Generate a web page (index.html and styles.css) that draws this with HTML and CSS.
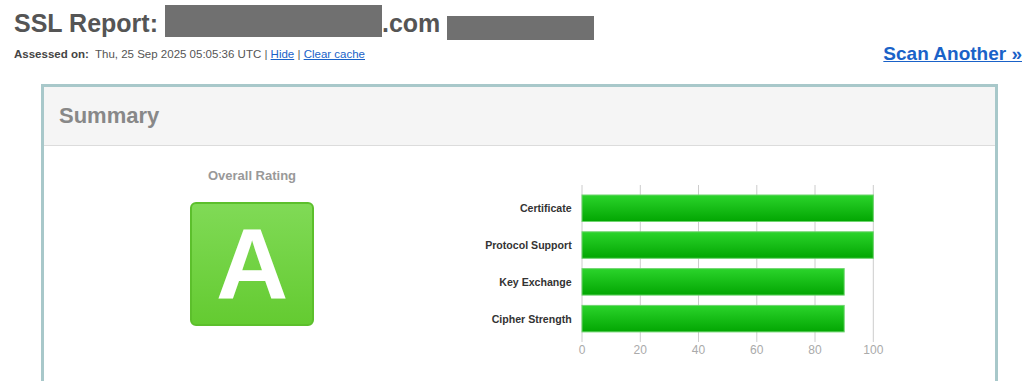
FILE: index.html
```html
<!DOCTYPE html>
<html lang="en">
	<head>
		<meta charset="UTF-8" />
		<title>SSL Report</title>
		<link rel="stylesheet" href="styles.css">
	</head>
	<body>
		<div class="report-header">
			<div class="report-title">
				<h1>SSL Report: <span class="redacted redacted-host"></span>.com <span class="redacted redacted-ip"></span></h1>
				<div class="assessed">
					<b>Assessed on:</b>
					<span class="assessed-date">Thu, 25 Sep 2025 05:05:36 UTC | <a href="#">Hide</a> | <a href="#">Clear cache</a></span>
				</div>
			</div>
			<a class="scan-another" href="#">Scan Another &raquo;</a>
		</div>

		<div class="summary">
			<div class="summary-title">Summary</div>
			<div class="summary-body">
				<div class="rating">
					<div class="rating-label">Overall Rating</div>
					<div class="grade">A</div>
				</div>

				<svg class="chart" width="420" height="180" viewBox="0 0 420 180">
					<g class="grid">
						<line x1="112" y1="5" x2="112" y2="162" />
						<line x1="170.3" y1="5" x2="170.3" y2="162" />
						<line x1="228.5" y1="5" x2="228.5" y2="162" />
						<line x1="286.8" y1="5" x2="286.8" y2="162" />
						<line x1="345" y1="5" x2="345" y2="162" />
						<line x1="403.3" y1="5" x2="403.3" y2="162" />
					</g>
					<defs>
						<linearGradient id="bar" x1="0" y1="0" x2="0" y2="1">
							<stop offset="0" stop-color="#2bd42b" />
							<stop offset="1" stop-color="#02a602" />
						</linearGradient>
					</defs>
					<g class="bars">
						<rect x="112" y="15" width="291.3" height="26.5" />
						<rect x="112" y="51.8" width="291.3" height="26.5" />
						<rect x="112" y="88.6" width="262.2" height="26.5" />
						<rect x="112" y="125.4" width="262.2" height="26.5" />
					</g>
					<g class="bar-labels">
						<text x="101.7" y="32.2">Certificate</text>
						<text x="101.7" y="69">Protocol Support</text>
						<text x="101.7" y="105.8">Key Exchange</text>
						<text x="101.7" y="142.6">Cipher Strength</text>
					</g>
					<g class="axis-labels">
						<text x="112" y="174">0</text>
						<text x="170.3" y="174">20</text>
						<text x="228.5" y="174">40</text>
						<text x="286.8" y="174">60</text>
						<text x="345" y="174">80</text>
						<text x="403.3" y="174">100</text>
					</g>
				</svg>
			</div>
		</div>
	</body>
</html>
```

FILE: styles.css
```css
* {
	margin: 0;
	padding: 0;
	box-sizing: border-box;
}

body {
	font-family: "Liberation Sans", Arial, sans-serif;
	color: #555;
	background: #fff;
	overflow: hidden;
}

a {
	color: #1a62c8;
}

.report-header {
	display: flex;
	justify-content: space-between;
	align-items: flex-end;
	padding: 0 2px 0 14px;
}

h1 {
	font-size: 25px;
	line-height: 34px;
	padding-top: 5px;
	color: #555;
	white-space: nowrap;
}

.redacted {
	display: inline-block;
	background: #707070;
}

.redacted-host {
	width: 217px;
	height: 32px;
	vertical-align: -5px;
}

.redacted-ip {
	width: 147px;
	height: 24px;
	vertical-align: -8px;
}

.assessed {
	margin-top: 7px;
	font-size: 11.5px;
	line-height: 14px;
}

.assessed b {
	color: #444;
}

.assessed-date {
	margin-left: 3px;
}

.scan-another {
	font-size: 19px;
	font-weight: bold;
	line-height: 22px;
	margin-bottom: -4px;
}

.summary {
	margin: 23px 26px 0 41px;
	border: 3px solid #a8c8ca;
	border-bottom: none;
}

.summary-title {
	background: #f5f5f5;
	border-bottom: 1px solid #dcdcdc;
	font-size: 22px;
	font-weight: bold;
	line-height: 54px;
	padding: 2px 0 2px 15px;
	color: #888;
}

.summary-body {
	display: flex;
	padding-bottom: 40px;
}

.rating {
	width: 416px;
	display: flex;
	flex-direction: column;
	align-items: center;
	padding-top: 21.5px;
}

.rating-label {
	font-size: 13px;
	font-weight: bold;
	line-height: 16px;
	color: #999;
}

.grade {
	margin-top: 18px;
	width: 124px;
	height: 124px;
	border: 2px solid #5cbf2c;
	border-radius: 6px;
	background: linear-gradient(#80da56, #64cb31);
	color: #fff;
	font-size: 100px;
	font-weight: bold;
	line-height: 100px;
	display: flex;
	align-items: center;
	justify-content: center;
}

.chart {
	margin: 34px 0 0 10px;
	font-family: "Liberation Sans", Arial, sans-serif;
}

.grid line {
	stroke: #ccc;
	stroke-width: 1;
}

.bars rect {
	fill: url(#bar);
	stroke: #6fd46f;
	stroke-width: 1;
}

.bar-labels text {
	font-size: 10.6px;
	font-weight: bold;
	fill: #333;
	text-anchor: end;
}

.axis-labels text {
	font-size: 12px;
	fill: #aaa;
	text-anchor: middle;
}
```
